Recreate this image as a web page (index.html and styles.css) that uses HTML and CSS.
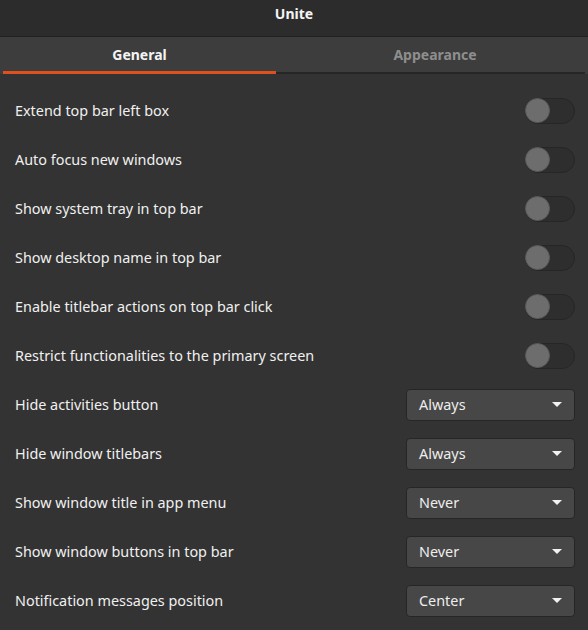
FILE: index.html
```html
<!DOCTYPE html>
<html>
<head>
<meta charset="utf-8">
<link rel="stylesheet" href="styles.css">
</head>
<body>
<div class="window">
  <header class="headerbar"><span class="title">Unite</span></header>
  <nav class="tabs">
    <div class="tab active"><span>General</span></div>
    <div class="tab"><span>Appearance</span></div>
  </nav>
  <main class="content">
    <div class="row"><span class="label">Extend top bar left box</span><span class="switch"><span class="knob"></span></span></div>
    <div class="row"><span class="label">Auto focus new windows</span><span class="switch"><span class="knob"></span></span></div>
    <div class="row"><span class="label">Show system tray in top bar</span><span class="switch"><span class="knob"></span></span></div>
    <div class="row"><span class="label">Show desktop name in top bar</span><span class="switch"><span class="knob"></span></span></div>
    <div class="row"><span class="label">Enable titlebar actions on top bar click</span><span class="switch"><span class="knob"></span></span></div>
    <div class="row"><span class="label">Restrict functionalities to the primary screen</span><span class="switch"><span class="knob"></span></span></div>
    <div class="row"><span class="label">Hide activities button</span><span class="combo"><span>Always</span><span class="arrow"></span></span></div>
    <div class="row"><span class="label">Hide window titlebars</span><span class="combo"><span>Always</span><span class="arrow"></span></span></div>
    <div class="row"><span class="label">Show window title in app menu</span><span class="combo"><span>Never</span><span class="arrow"></span></span></div>
    <div class="row"><span class="label">Show window buttons in top bar</span><span class="combo"><span>Never</span><span class="arrow"></span></span></div>
    <div class="row"><span class="label">Notification messages position</span><span class="combo"><span>Center</span><span class="arrow"></span></span></div>
  </main>
</div>
</body>
</html>
```
FILE: styles.css
```css
html, body {
  margin: 0;
  padding: 0;
  background: #333333;
}
body {
  font-family: "Noto Sans", "DejaVu Sans", sans-serif;
  color: #f2f2f2;
  width: 588px;
  height: 630px;
  overflow: hidden;
}
.window {
  display: flex;
  flex-direction: column;
  height: 630px;
}
.headerbar {
  height: 36px;
  background: #2c2c2c;
  border-bottom: 1px solid #202020;
  display: flex;
  align-items: center;
  justify-content: center;
}
.title {
  font-weight: bold;
  font-size: 14px;
  color: #f4f4f4;
  margin-top: -10px;
}
.tabs {
  height: 37px;
  background: #3d3d3d;
  display: flex;
  padding: 0 3px;
}
.tab {
  display: flex;
  align-items: center;
  justify-content: center;
  font-weight: bold;
  font-size: 14px;
  color: #8e8e8e;
  border-bottom: 2px solid #262626;
  box-sizing: border-box;
}
.tab:first-child {
  width: 273px;
}
.tab:last-child {
  flex: 1;
  padding-left: 9px;
}
.tab.active {
  color: #f4f4f4;
  border-bottom: 3px solid #e0501c;
}
.content {
  padding: 12px 13px 0 15px;
  display: flex;
  flex-direction: column;
}
.row {
  height: 49px;
  display: flex;
  align-items: center;
  justify-content: space-between;
}
.label {
  font-size: 14.4px;
  color: #f0f0f0;
}
.switch {
  width: 50px;
  height: 26px;
  box-sizing: border-box;
  border: 1px solid #262626;
  border-radius: 13px;
  background: #2e2e2e;
  display: flex;
  align-items: center;
}
.knob {
  width: 25px;
  height: 25px;
  box-sizing: border-box;
  border-radius: 50%;
  background: #6d6d6d;
  border: 1px solid #5a5a5a;
  margin-left: -1px;
}
.combo {
  width: 169px;
  height: 32px;
  box-sizing: border-box;
  border: 1px solid #262626;
  border-radius: 4px;
  background: #474747;
  display: flex;
  align-items: center;
  justify-content: space-between;
  padding: 0 12px 0 12px;
  font-size: 14.4px;
  color: #eeeeee;
}
.arrow {
  width: 0;
  height: 0;
  border-left: 5px solid transparent;
  border-right: 5px solid transparent;
  border-top: 5px solid #f2f2f2;
}
```
